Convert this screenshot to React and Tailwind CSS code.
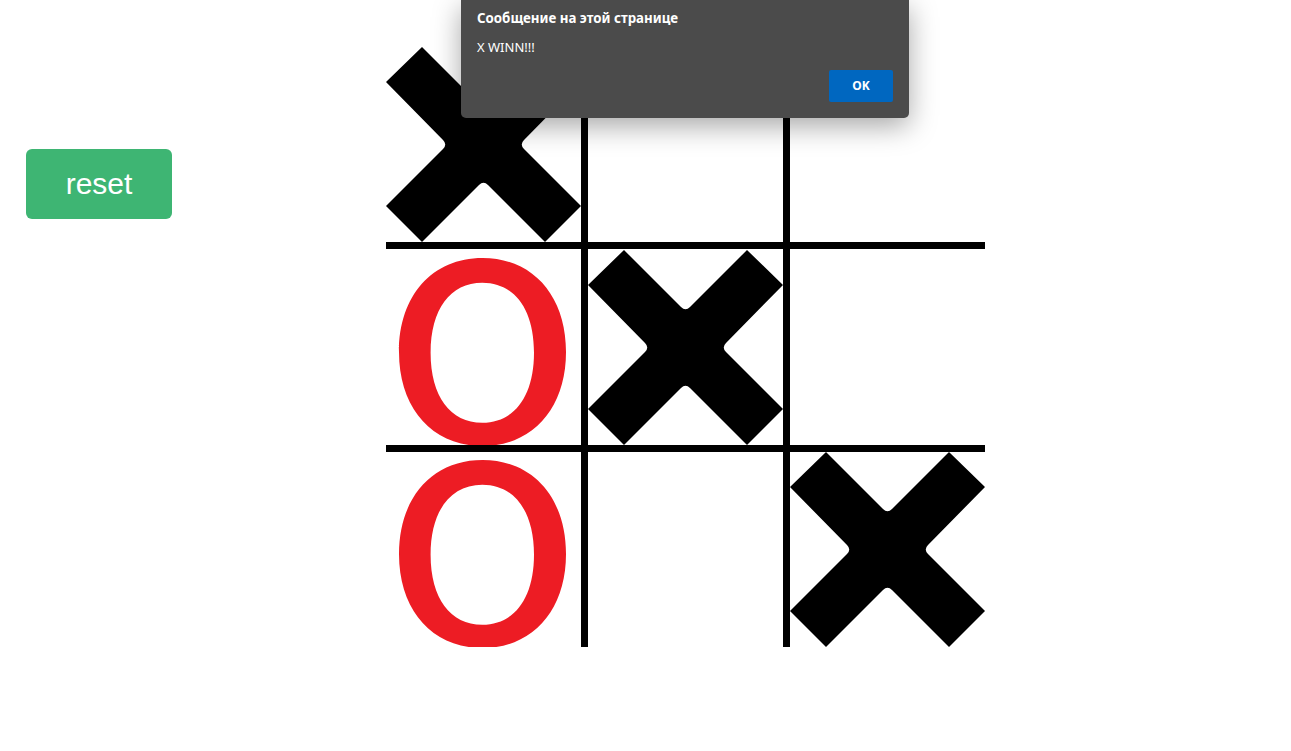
import React from "react";

const board = ["x", "", "", "o", "x", "", "o", "", "x"];

// rounded oval, a bit fuller than a plain ellipse
const oval = (cx, cy, rx, ry, k = 0.62) => {
    const kx = rx * k;
    const ky = ry * k;
    return [
        `M${cx - rx} ${cy}`,
        `C${cx - rx} ${cy - ky} ${cx - kx} ${cy - ry} ${cx} ${cy - ry}`,
        `C${cx + kx} ${cy - ry} ${cx + rx} ${cy - ky} ${cx + rx} ${cy}`,
        `C${cx + rx} ${cy + ky} ${cx + kx} ${cy + ry} ${cx} ${cy + ry}`,
        `C${cx - kx} ${cy + ry} ${cx - rx} ${cy + ky} ${cx - rx} ${cy}Z`,
    ].join(" ");
};

const Cross = () => (
    <svg width="195" height="195" viewBox="0 0 195 195">
        <path
            d="M0 35 L36 0 L93 57 Q97.5 61.5 102 57 L159 0 L195 35 L138 93 Q133.5 97.5 138 102 L195 159 L159 195 L102 138 Q97.5 133.5 93 138 L36 195 L0 159 L57 102 Q61.5 97.5 57 93 Z"
            fill="#000"
        />
    </svg>
);

const Ring = () => (
    <svg width="195" height="195" viewBox="0 0 195 195">
        <path
            fillRule="evenodd"
            d={`${oval(96.5, 102, 83.5, 94, 0.6)} ${oval(96.3, 102.7, 51.7, 70, 0.62)}`}
            fill="#ed1c24"
        />
    </svg>
);

const App = () => {
    return (
        <div className="relative min-h-screen w-full bg-white">
            <div className="flex items-start">
                <button className="ml-[26px] mt-[149px] w-[146px] h-[70px] rounded-md bg-[#3eb573] text-white text-[30px] leading-none font-['Liberation_Sans',Arial,sans-serif]">
                    reset
                </button>

                <div className="ml-[214px] mt-[47px] grid grid-cols-[195px_195px_195px] grid-rows-[195px_196px_195px] gap-[7px] bg-black">
                    {board.map((cell, i) => (
                        <div key={i} className="bg-white flex items-center justify-center overflow-hidden">
                            {cell === "x" && <Cross />}
                            {cell === "o" && <Ring />}
                        </div>
                    ))}
                </div>
            </div>

            {/* alert */}
            <div className="absolute left-[461px] top-0 w-[448px] h-[118px] rounded-b-[5px] bg-[#4b4b4b] shadow-[0_8px_28px_rgba(0,0,0,0.35)] font-['Noto_Sans','Open_Sans',sans-serif] text-white">
                <div className="pl-4 pt-[9px] text-[13.3px] font-bold">Сообщение на этой странице</div>
                <div className="pl-4 pt-[9px] text-[13px]">X WINN!!!</div>
                <div className="flex justify-end pr-4 pt-[13px]">
                    <button className="w-16 h-8 rounded-[2px] bg-[#0067c0] text-[12px] font-bold text-white">OK</button>
                </div>
            </div>
        </div>
    );
};

export default App;
